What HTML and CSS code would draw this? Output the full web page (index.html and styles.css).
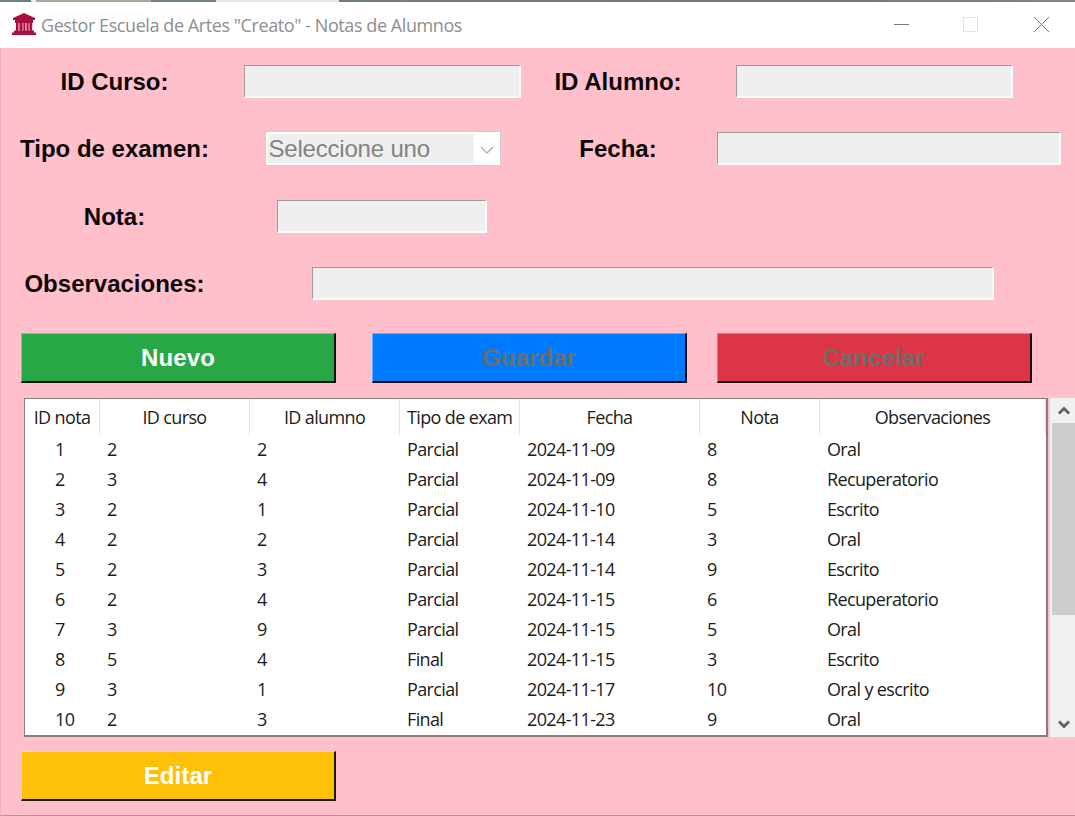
FILE: index.html
```
<!DOCTYPE html>
<html lang="es">
<head>
<meta charset="utf-8">
<title>Gestor Escuela de Artes "Creato" - Notas de Alumnos</title>
<link rel="stylesheet" href="styles.css">
</head>
<body>
<div class="desktop-strip"><i class="s1"></i><i class="s2"></i><i class="s3"></i><i class="s4"></i><i class="s5"></i><i class="s6"></i></div>
<header class="titlebar">
  <svg class="logo" width="24" height="23" viewBox="0 0 24 23"><path fill="#a80f3d" d="M12 0 23 5v2H1V5zM3 7h18v3H3zM4 10h2.200v8H4zM8 10h2v8H8zM11.300 10h2v8h-2zM14.700 10h2v8h-2zM18 10h2.200v8H18zM2 17.500h20V20H2zM0 19.500h24V22H0z"/><path fill="#cf6d8c" d="M6.200 10H8v7.500H6.200zM10 10h1.300v7.500H10zM13.300 10h1.400v7.500h-1.400zM16.700 10H18v7.500h-1.300z"/></svg>
  <h1 class="title">Gestor Escuela de Artes "Creato" - Notas de Alumnos</h1>
  <svg class="controls" width="158" height="18" viewBox="0 0 158 18" fill="none" shape-rendering="crispEdges"><path stroke="#777" d="M1 8.500h15"/><path stroke="#e3e3e3" d="M70.500 1.500h14v14h-14z"/><path shape-rendering="auto" stroke="#777" d="m141 1 15 15M156 1l-15 15"/></svg>
</header>
<main class="window">
  <form class="form">
    <label class="label">ID Curso:</label><span class="field w277"></span>
    <label class="label">ID Alumno:</label><span class="field w277 short"></span>
    <label class="label">Tipo de examen:</label>
    <span class="combo"><span class="combo-text">Seleccione uno</span><span class="combo-arrow"><svg width="14" height="8" viewBox="0 0 14 8" fill="none" stroke="#b5b5b5" stroke-width="1.500"><path d="m1 1 6 6 6-6"/></svg></span></span>
    <label class="label">Fecha:</label><span class="field w345"></span>
    <label class="label">Nota:</label><span class="field w210"></span>
    <label class="label first">Observaciones:</label><span class="field w682 wide"></span>
  </form>
  <div class="actions">
    <button class="btn green">Nuevo</button>
    <button class="btn blue off">Guardar</button>
    <button class="btn red off">Cancelar</button>
  </div>
  <div class="list">
    <table class="table">
      <colgroup><col class="c1"><col class="c2"><col class="c2"><col class="c4"><col class="c5"><col class="c4"><col class="c7"></colgroup>
      <thead><tr><th>ID nota</th><th>ID curso</th><th>ID alumno</th><th class="cut">Tipo de exam</th><th>Fecha</th><th>Nota</th><th>Observaciones</th></tr></thead>
      <tbody>
      <tr><td>1</td><td>2</td><td>2</td><td>Parcial</td><td>2024-11-09</td><td>8</td><td>Oral</td></tr>
      <tr><td>2</td><td>3</td><td>4</td><td>Parcial</td><td>2024-11-09</td><td>8</td><td>Recuperatorio</td></tr>
      <tr><td>3</td><td>2</td><td>1</td><td>Parcial</td><td>2024-11-10</td><td>5</td><td>Escrito</td></tr>
      <tr><td>4</td><td>2</td><td>2</td><td>Parcial</td><td>2024-11-14</td><td>3</td><td>Oral</td></tr>
      <tr><td>5</td><td>2</td><td>3</td><td>Parcial</td><td>2024-11-14</td><td>9</td><td>Escrito</td></tr>
      <tr><td>6</td><td>2</td><td>4</td><td>Parcial</td><td>2024-11-15</td><td>6</td><td>Recuperatorio</td></tr>
      <tr><td>7</td><td>3</td><td>9</td><td>Parcial</td><td>2024-11-15</td><td>5</td><td>Oral</td></tr>
      <tr><td>8</td><td>5</td><td>4</td><td>Final</td><td>2024-11-15</td><td>3</td><td>Escrito</td></tr>
      <tr><td>9</td><td>3</td><td>1</td><td>Parcial</td><td>2024-11-17</td><td>10</td><td>Oral y escrito</td></tr>
      <tr><td>10</td><td>2</td><td>3</td><td>Final</td><td>2024-11-23</td><td>9</td><td>Oral</td></tr>
      </tbody>
    </table>
    <div class="scroll">
      <span class="arrow"><svg width="12" height="9" viewBox="0 0 12 9" fill="none" stroke="#606060" stroke-width="2.800"><path d="m1 7.500 5-5 5 5"/></svg></span>
      <span class="thumb"></span>
      <span class="arrow down"><svg width="12" height="9" viewBox="0 0 12 9" fill="none" stroke="#606060" stroke-width="2.800"><path d="m1 1.500 5 5 5-5"/></svg></span>
    </div>
  </div>
  <button class="btn yellow">Editar</button>
</main>
</body>
</html>
```
FILE: styles.css
```
* { box-sizing: border-box; }
body { margin: 0; width: 1075px; height: 816px; overflow: hidden; background: #fff; font-family: "Liberation Sans", Arial, sans-serif; }
.desktop-strip { display: flex; height: 2px; background: #6f7a82; }
.s1 { width: 31px; background: #6f7d87; }
.s2 { width: 5px; background: #ececec; }
.s3 { width: 115px; background: #a3ad98; }
.s4 { width: 65px; background: #6f7d87; }
.s5 { width: 123px; background: #e4e6e8; }
.s6 { flex: 1; background: linear-gradient(90deg, #6f7d87, #77777f 70%, #8c7f85); }
.titlebar { display: flex; height: 46px; padding-left: 12px; background: #fff; }
.logo { margin-top: 11px; }
.title { margin: 10px 0 0 5px; width: 852px; font: 400 18px/26px "Open Sans", "Noto Sans", sans-serif; letter-spacing: -0.42px; color: #8e8e8e; white-space: nowrap; }
.controls { margin-top: 14px; flex: none; }
.window { height: 768px; background: #ffc0cb; border-left: 1px solid #e9b3bd; border-bottom: 1px solid #b5949b; }
.form { display: grid; grid-template-columns: 229px 307px 164px 377px; grid-auto-rows: 67.5px; align-items: center; justify-items: center; margin-left: -1px; }
.label { font-size: 24px; font-weight: 700; line-height: 28px; color: #0b0708; white-space: nowrap; }
.first { grid-column: 1; }
.field { height: 33px; margin-bottom: 1px; background: #efefef; border: 1px solid; border-color: #a0999b #fafafa #fafafa #a0999b; border-right-width: 2px; border-bottom-width: 2px; }
.w277 { width: 277px; }
.w345 { width: 344px; }
.w210 { width: 210px; margin-right: 1px; }
.w682 { width: 682px; }
.short { margin-right: 28px; }
.wide { grid-column: 2 / 5; }
.combo { display: flex; width: 236px; height: 35px; margin-bottom: 1px; border: 1px solid #cfcccc; background: #fff; padding: 2px 0 2px 2px; }
.combo-text { width: 206px; padding-left: 1px; background: #efefef; color: #838383; font-size: 24px; line-height: 29px; letter-spacing: -0.2px; white-space: nowrap; }
.combo-arrow { flex: 1; display: flex; align-items: center; justify-content: center; padding-top: 3px; }
.actions { display: flex; padding: 15px 0 0 20px; }
.btn { display: block; width: 315px; height: 50px; padding: 1px 0 0; border: 1px solid; border-right-width: 2px; border-bottom-width: 2px; border-radius: 0; font: 700 24px/28px "Liberation Sans", Arial, sans-serif; letter-spacing: 0.1px; color: #fff; }
.green { background: #28a745; border-color: #7acb8b #06140a #06140a #7acb8b; }
.blue { margin-left: 36px; background: #007bff; border-color: #63adff #020b18 #020b18 #63adff; }
.red { margin-left: 30px; background: #dc3545; border-color: #ea7883 #180609 #180609 #ea7883; }
.yellow { margin: 14px 0 0 20px; background: #ffc107; border-color: #ffe071 #1e1704 #1e1704 #ffe071; }
.off { color: #6d6d6d; }
.list { display: flex; margin: 15px 0 0 23px; height: 339px; gap: 2px; }
.table { width: 1024px; height: 339px; border: 1px solid #877d82; border-right-width: 2px; border-bottom-width: 2px; border-collapse: separate; border-spacing: 0; table-layout: fixed; background: #fff; font: 400 18px/28px "Open Sans", "Noto Sans", sans-serif; letter-spacing: -0.63px; color: #1b1b1b; }
.c1 { width: 75px; }
.c2 { width: 150px; }
.c4 { width: 120px; }
.c5 { width: 180px; }
.table th { height: 36px; padding: 0; border-right: 1px solid #e3e3e3; font-weight: 400; text-align: center; white-space: nowrap; overflow: hidden; }
.table .cut { text-align: left; padding-left: 7px; }
.table td { height: 30px; padding: 0 0 2px 7px; white-space: nowrap; }
.table td:first-child { padding-left: 30px; }
.scroll { display: flex; flex-direction: column; width: 25px; padding-left: 2px; background: #f0f0f0; }
.arrow { display: flex; height: 25px; align-items: center; justify-content: center; }
.thumb { height: 192px; background: #cdcdcd; }
.down { margin-top: auto; }
```
